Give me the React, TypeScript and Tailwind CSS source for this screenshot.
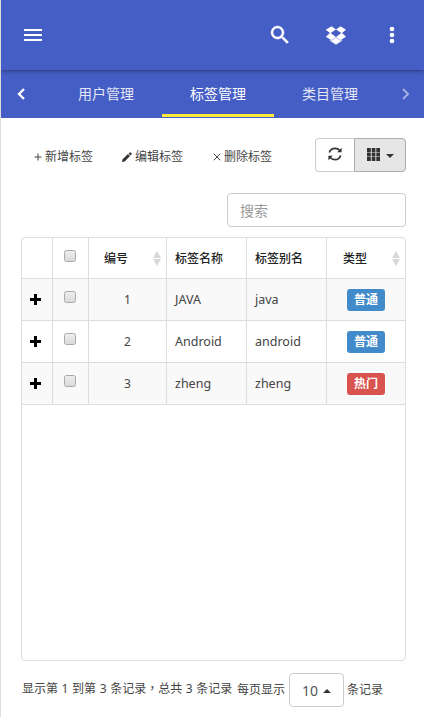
import React from "react";

const rows = [
  { id: 1, name: "JAVA", alias: "java", type: "普通", hot: false },
  { id: 2, name: "Android", alias: "android", type: "普通", hot: false },
  { id: 3, name: "zheng", alias: "zheng", type: "热门", hot: true },
];

function Checkbox() {
  return (
    <span
      role="checkbox"
      aria-checked="false"
      className="mt-[12px] ml-[11px] block size-[12px] rounded-[2.5px] border border-[#a9a9a9] bg-linear-to-b from-[#eeeeee] to-[#dadada]"
    />
  );
}

function SortIcon() {
  return (
    <svg className="h-[15px] w-[8px] shrink-0" viewBox="0 0 8 15" fill="#d8d8d8">
      <path d="M4 0L8 7H0ZM0 8H8L4 15Z" />
    </svg>
  );
}

function Header() {
  return (
    <header className="relative z-10 flex h-[70px] shrink-0 items-center bg-[#455ec5] pl-[23px] text-white shadow-[0_1px_4px_rgba(0,0,0,0.4)]">
      <svg className="h-[12px] w-[18px]" viewBox="0 0 18 12" fill="currentColor">
        <path d="M0 0h18v2H0zM0 5h18v2H0zM0 10h18v2H0z" />
      </svg>
      <svg className="ml-[226px] size-[24px]" viewBox="0 0 24 24" fill="currentColor" stroke="currentColor" strokeWidth=".5">
        <path d="M15.5 14h-.79l-.28-.27A6.47 6.47 0 0 0 16 9.5 6.5 6.5 0 1 0 9.5 16c1.61 0 3.09-.59 4.23-1.57l.27.28v.79l5 4.99L20.49 19l-4.99-5zm-6 0C7.01 14 5 11.99 5 9.5S7.01 5 9.5 5 14 7.01 14 9.5 11.99 14 9.5 14z" />
      </svg>
      <svg className="ml-[33px] h-[19px] w-[21px]" viewBox="-0.5 0 21 19" fill="currentColor">
        <path d="M6 0.2L10.5 3.6L4.8 7.3L0.3 3.8ZM15 0.2L20.5 3.8L16.2 7.3L10.5 3.6Z" />
        <path d="M4.8 6.7L10.5 10.9L6.1 14.2L0.3 10.7ZM16.2 6.7L20.5 10.7L14.9 14.2L10.5 10.9Z" />
        <path d="M4.4 13.6L6.2 14.8L10.5 11.6L14.8 14.8L16.6 13.6V14.8L10.5 18.8L4.4 14.8Z" opacity=".9" />
        <path d="M10.5 11.2L14.8 14.8L10.5 17.8L6.2 14.8Z" opacity=".8" />
      </svg>
      <svg className="ml-[43px] h-[18px] w-[6px]" viewBox="0 0 6 18" fill="currentColor">
        <circle cx="3" cy="3" r="2.3" />
        <circle cx="3" cy="9" r="2.3" />
        <circle cx="3" cy="15" r="2.3" />
      </svg>
    </header>
  );
}

function Tabs() {
  return (
    <nav className="flex h-[48px] shrink-0 items-center bg-[#455ec5] text-[14px] text-white">
      <div className="w-[49px] pl-[16px]">
        <svg className="h-[12px] w-[8px]" viewBox="0 0 8 12" fill="none" stroke="currentColor" strokeWidth="2.3">
          <path d="M7 1L2 6L7 11" />
        </svg>
      </div>
      <div className="flex h-full w-[112px] items-center justify-center pb-[2px] text-white/85">用户管理</div>
      <div className="mb-px flex h-[47px] w-[112px] items-center justify-center border-b-3 border-[#ffeb3b] pt-[2px]">标签管理</div>
      <div className="flex h-full w-[112px] items-center justify-center pb-[2px] text-white/85">类目管理</div>
      <svg className="ml-[16px] h-[12px] w-[8px]" viewBox="0 0 8 12" fill="none" stroke="currentColor" strokeWidth="2" opacity=".5">
        <path d="M1 1L6 6L1 11" />
      </svg>
    </nav>
  );
}

function Toolbar() {
  return (
    <div className="flex h-[34px] items-center">
      <div className="flex flex-1 items-center pt-[3px] pl-[13px] text-[12px] leading-[18px]">
        <svg className="mr-[3px] size-[8px]" viewBox="0 0 8 8" stroke="#444">
          <path d="M4 .5V7.5M.5 4H7.5" />
        </svg>
        <span className="w-[77px]">新增标签</span>
        <svg className="mr-[3px] size-[10px]" viewBox="0 0 10 10" fill="#333">
          <path d="M0 10L.6 7.3L6 2L8 4L2.7 9.4ZM6.6 1.4L7.7.4Q8.2 0 8.7.4L9.6 1.3Q10 1.8 9.6 2.3L8.6 3.4Z" />
        </svg>
        <span className="w-[78px]">编辑标签</span>
        <svg className="mr-[3px] size-[8px]" viewBox="0 0 8 8" stroke="#444">
          <path d="M.7 .7L7.3 7.3M7.3 .7L.7 7.3" />
        </svg>
        <span>删除标签</span>
      </div>
      <div className="flex h-[34px] w-[91px]">
        <button className="flex w-[39px] items-center justify-center rounded-l-[4px] border border-r-0 border-[#ccc] bg-white pb-[2px]">
          <svg className="size-[14px]" viewBox="0 0 14 14" fill="none" stroke="#333" strokeWidth="1.7">
            <path d="M1.3 5.5C2.2 2.8 4.3 1.3 7 1.3C9 1.3 10.6 2 11.9 3.5M12.7 8.5C11.8 11.2 9.7 12.7 7 12.7C5 12.7 3.4 12 2.1 10.5" />
            <path d="M13.6.8V5.3H9.1ZM.4 13.2V8.7H4.9Z" fill="#333" stroke="none" />
          </svg>
        </button>
        <button className="flex w-[52px] items-center justify-center gap-[6px] rounded-r-[4px] border border-[#adadad] bg-[#e6e6e6] pb-[1px]">
          <svg className="h-[13px] w-[13px]" viewBox="0 0 13 13" fill="#333">
            <path d="M0 0H3.8V4H0ZM4.7 0H8.4V4H4.7ZM9.3 0H13V4H9.3ZM0 4.5H3.8V8.5H0ZM4.7 4.5H8.4V8.5H4.7ZM9.3 4.5H13V8.5H9.3ZM0 9H3.8V13H0ZM4.7 9H8.4V13H4.7ZM9.3 9H13V13H9.3Z" />
          </svg>
          <svg className="mt-[3px] h-[4px] w-[8px]" viewBox="0 0 8 4" fill="#333"><path d="M0 0H8L4 4Z" /></svg>
        </button>
      </div>
    </div>
  );
}

function TagTable() {
  const grid = "grid grid-cols-[31px_36px_78px_80px_80px_78px]";
  const cell = "border-r border-[#ddd]";
  return (
    <div className="mt-[10px] h-[424px] overflow-hidden rounded-[4px] border border-[#ddd] text-[12px]">
      <div className={`${grid} h-[41px] border-b border-[#ddd] font-medium text-[#222]`}>
        <div className={cell} />
        <div className={cell}><Checkbox /></div>
        <div className={`${cell} flex items-center justify-between pt-px pr-[5px] pl-[15px]`}>编号<SortIcon /></div>
        <div className={`${cell} flex items-center pt-[2px] pl-[8px]`}>标签名称</div>
        <div className={`${cell} flex items-center pt-[2px] pl-[8px]`}>标签别名</div>
        <div className="flex items-center justify-between pt-px pr-[5px] pl-[16px]">类型<SortIcon /></div>
      </div>
      {rows.map((row) => (
        <div key={row.id} className={`${grid} h-[42px] border-b border-[#ddd] odd:bg-white even:bg-[#f9f9f9]`}>
          <div className={`${cell} flex items-center pl-[8px]`}>
            <svg className="size-[11px]" viewBox="0 0 11 11" fill="#000"><path d="M4 0H7V4H11V7H7V11H4V7H0V4H4Z" /></svg>
          </div>
          <div className={cell}><Checkbox /></div>
          <div className={`${cell} flex items-center justify-center pt-px`}>{row.id}</div>
          <div className={`${cell} flex items-center pt-[2px] pl-[8px] text-[12.5px]`}>{row.name}</div>
          <div className={`${cell} flex items-center pt-[2px] pl-[8px] text-[12.5px]`}>{row.alias}</div>
          <div className="flex items-center justify-center">
            <span className={`flex h-[22px] w-[38px] items-center justify-center rounded-[3px] font-bold text-white ${row.hot ? "bg-[#d9534f]" : "bg-[#428bca]"}`}>{row.type}</span>
          </div>
        </div>
      ))}
    </div>
  );
}

export default function App() {
  return (
    <div className="flex h-[717px] w-[424px] flex-col overflow-hidden border-l border-[#ddd] bg-white font-['Noto_Sans','Noto_Sans_CJK_SC',sans-serif] text-[#444]">
      <Header />
      <Tabs />
      <main className="pt-[20px] pr-[18px] pl-[20px]">
        <Toolbar />
        <div className="mt-[21px] flex justify-end">
          <input placeholder="搜索" className="h-[34px] w-[179px] rounded-[4px] border border-[#ccc] px-[12px] text-[14px] outline-none placeholder:text-[#999]" />
        </div>
        <TagTable />
        <div className="mt-[12px] flex h-[34px] items-center text-[12px] whitespace-nowrap">
          <span className="w-[216px] pb-[2px] pl-px [word-spacing:0.5px]">显示第 1 到第 3 条记录<span className="font-['Noto_Sans_CJK_TC',sans-serif] leading-none">，</span>总共 3 条记录</span>
          <span className="w-[52px]">每页显示</span>
          <button className="flex h-[34px] w-[55px] items-center justify-center gap-[5px] rounded-[4px] border border-[#ccc] text-[14px] text-[#555]">
            10
            <svg className="mt-[2px] h-[4px] w-[8px]" viewBox="0 0 8 4" fill="#333"><path d="M0 4H8L4 0Z" /></svg>
          </button>
          <span className="ml-[3px]">条记录</span>
        </div>
      </main>
    </div>
  );
}
